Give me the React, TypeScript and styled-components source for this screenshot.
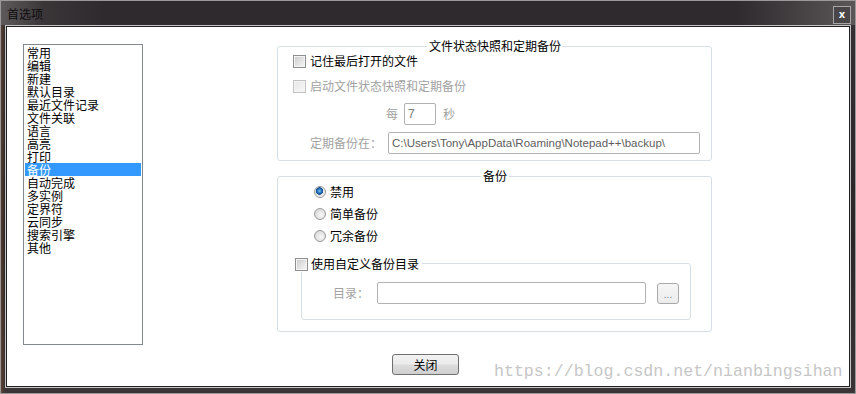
import styled, { createGlobalStyle } from "styled-components";

const NAV_ITEMS = [
  "常用",
  "编辑",
  "新建",
  "默认目录",
  "最近文件记录",
  "文件关联",
  "语言",
  "高亮",
  "打印",
  "备份",
  "自动完成",
  "多实例",
  "定界符",
  "云同步",
  "搜索引擎",
  "其他",
];

const SELECTED = "备份";

const BACKUP_MODES = ["禁用", "简单备份", "冗余备份"];

export default function App() {
  return (
    <>
      <GlobalStyle />
      <Window>
        <TitleBar>
          <TitleText>首选项</TitleText>
          <CloseButton>x</CloseButton>
        </TitleBar>
        <Client>
          <Body>
            <ListBox>
              {NAV_ITEMS.map((item) => (
                <ListItem key={item} $selected={item === SELECTED}>
                  {item}
                </ListItem>
              ))}
            </ListBox>
            <Panel>
              <Group>
                <GroupTitle $left={149}>文件状态快照和定期备份</GroupTitle>
                <GroupBody $padTop={6} $padBottom={6}>
                  <CheckRow>
                    <CheckBox />
                    <Label>记住最后打开的文件</Label>
                  </CheckRow>
                  <CheckRow $marginTop={9}>
                    <CheckBox $disabled />
                    <Label $disabled>启动文件状态快照和定期备份</Label>
                  </CheckRow>
                  <FieldRow $marginTop={9} $indent={93}>
                    <Label $disabled>每</Label>
                    <TextBox $width={32} $gapLeft={6}>
                      7
                    </TextBox>
                    <Label $disabled style={{ marginLeft: 7 }}>
                      秒
                    </Label>
                  </FieldRow>
                  <FieldRow $marginTop={7} $indent={17}>
                    <Label $disabled>定期备份在：</Label>
                    <TextBox $width={312} $gapLeft={6} $path>
                      C:\Users\Tony\AppData\Roaming\Notepad++\backup\
                    </TextBox>
                  </FieldRow>
                </GroupBody>
              </Group>

              <Group $marginTop={15}>
                <GroupTitle $left={203}>备份</GroupTitle>
                <GroupBody $padTop={7} $padBottom={11}>
                  <RadioList>
                    {BACKUP_MODES.map((mode, i) => (
                      <CheckRow key={mode}>
                        <Radio $checked={i === 0} />
                        <Label>{mode}</Label>
                      </CheckRow>
                    ))}
                  </RadioList>
                  <SubGroup>
                    <SubGroupTitle>
                      <CheckBox />
                      <Label>使用自定义备份目录</Label>
                    </SubGroupTitle>
                    <FieldRow $indent={31}>
                      <Label $disabled>目录：</Label>
                      <TextBox $width={269} $gapLeft={8} />
                      <BrowseButton>...</BrowseButton>
                    </FieldRow>
                  </SubGroup>
                </GroupBody>
              </Group>
            </Panel>
          </Body>
          <Footer>
            <PushButton>关闭</PushButton>
            <Watermark>https://blog.csdn.net/nianbingsihan</Watermark>
          </Footer>
        </Client>
      </Window>
    </>
  );
}

const GlobalStyle = createGlobalStyle`
  html, body {
    margin: 0;
    padding: 0;
    background: #ffffff;
  }
  body {
    font-family: "Noto Sans CJK SC", "Noto Sans", sans-serif;
    font-size: 12px;
    color: #000;
  }
`;

const Window = styled.div`
  width: 856px;
  height: 394px;
  box-sizing: border-box;
  display: flex;
  flex-direction: column;
  border: 1px solid #9a9899;
  background:
    linear-gradient(90deg, rgba(120, 78, 48, 0.55) 0, rgba(0, 0, 0, 0) 4px),
    linear-gradient(180deg, #343033 0%, #2a2628 60%, #3a3436 100%);
`;

const TitleBar = styled.div`
  height: 24px;
  flex: none;
  display: flex;
  align-items: center;
  justify-content: space-between;
  padding: 0 4px 0 6px;
  background: linear-gradient(
    90deg,
    #5e5a5c 0%,
    #3a3638 5%,
    #2e2a2d 12%,
    #2e2a2d 86%,
    #444042 93%,
    #5b5759 100%
  );
`;

const TitleText = styled.span`
  color: #0e0c0e;
  font-size: 12px;
  line-height: 14px;
  padding-top: 1px;
`;

const CloseButton = styled.span`
  width: 16px;
  height: 16px;
  margin-top: 4px;
  border: 1px solid #a8a4a6;
  background: #4a4548;
  color: #f4f4f4;
  font-family: "DejaVu Sans", sans-serif;
  font-size: 10px;
  font-weight: bold;
  line-height: 15px;
  text-align: center;
`;

const Client = styled.div`
  flex: 1;
  margin: 0 4px 5px 4px;
  border: 1px solid #c4c4c4;
  box-shadow: inset 0 0 0 1px #222022;
  background: #ffffff;
  display: flex;
  flex-direction: column;
  padding: 18px 0 0 17px;
`;

const Body = styled.div`
  display: flex;
  align-items: flex-start;
`;

const ListBox = styled.div`
  width: 120px;
  height: 301px;
  box-sizing: border-box;
  border: 1px solid #828790;
  padding: 1px 1px 0 1px;
  display: flex;
  flex-direction: column;
`;

const ListItem = styled.div<{ $selected?: boolean }>`
  height: 13px;
  line-height: 13px;
  padding-left: 2px;
  font-size: 12px;
  white-space: nowrap;
  color: ${(p) => (p.$selected ? "#ffffff" : "#000000")};
  background: ${(p) => (p.$selected ? "#3399ff" : "transparent")};
`;

const Panel = styled.div`
  width: 435px;
  margin: 2px 0 0 134px;
  display: flex;
  flex-direction: column;
`;

const Group = styled.div<{ $marginTop?: number }>`
  position: relative;
  border: 1px solid #d5dfe5;
  border-radius: 3px;
  margin-top: ${(p) => p.$marginTop ?? 0}px;
`;

const GroupTitle = styled.span<{ $left: number }>`
  position: absolute;
  top: -8px;
  left: ${(p) => p.$left}px;
  padding: 0 2px;
  background: #ffffff;
  line-height: 14px;
`;

const GroupBody = styled.div<{ $padTop: number; $padBottom: number }>`
  display: flex;
  flex-direction: column;
  padding: ${(p) => p.$padTop}px 0 ${(p) => p.$padBottom}px 15px;
`;

const CheckRow = styled.label<{ $marginTop?: number }>`
  display: flex;
  align-items: center;
  gap: 4px;
  height: 16px;
  margin-top: ${(p) => p.$marginTop ?? 0}px;
`;

const Label = styled.span<{ $disabled?: boolean }>`
  line-height: 16px;
  white-space: nowrap;
  color: ${(p) => (p.$disabled ? "#a2a2a2" : "#000000")};
`;

const CheckBox = styled.span<{ $disabled?: boolean }>`
  width: 13px;
  height: 13px;
  box-sizing: border-box;
  flex: none;
  border: 1px solid ${(p) => (p.$disabled ? "#c2c2c2" : "#8e8f8f")};
  box-shadow: inset 0 0 0 1px #f4f4f4;
  background: ${(p) =>
    p.$disabled
      ? "linear-gradient(135deg, #e6e6e6 0%, #f7f7f7 100%)"
      : "linear-gradient(135deg, #c9c9c9 0%, #e6e6e6 60%, #f6f6f6 100%)"};
`;

const RadioList = styled.div`
  display: flex;
  flex-direction: column;
  gap: 6px;
  margin-left: 21px;
`;

const Radio = styled.span<{ $checked?: boolean }>`
  width: 12px;
  height: 12px;
  box-sizing: border-box;
  flex: none;
  border-radius: 50%;
  border: 1px solid #9a9a9a;
  background: ${(p) =>
    p.$checked
      ? "radial-gradient(circle at 45% 40%, #7ec0f0 0, #2a79c0 2px, #0f4d8c 3.5px, #e8e8e8 4px, #f6f6f6 100%)"
      : "radial-gradient(circle at 60% 60%, #f7f7f7 0, #dcdcdc 70%, #cfcfcf 100%)"};
`;

const FieldRow = styled.div<{ $marginTop?: number; $indent: number }>`
  display: flex;
  align-items: center;
  height: 22px;
  margin-top: ${(p) => p.$marginTop ?? 0}px;
  padding-left: ${(p) => p.$indent}px;
`;

const TextBox = styled.span<{ $width: number; $gapLeft: number; $path?: boolean }>`
  width: ${(p) => p.$width}px;
  height: 22px;
  box-sizing: border-box;
  margin-left: ${(p) => p.$gapLeft}px;
  border: 1px solid #b2b2b2;
  border-radius: 2px;
  padding-left: 3px;
  font-family: "Liberation Sans", Arial, sans-serif;
  font-size: ${(p) => (p.$path ? "11.5px" : "12px")};
  line-height: 20px;
  color: ${(p) => (p.$path ? "#5e5e5e" : "#7a7a7a")};
  white-space: nowrap;
  overflow: hidden;
`;

const SubGroup = styled.div`
  position: relative;
  width: 390px;
  box-sizing: border-box;
  margin: 19px 0 0 8px;
  border: 1px solid #d5dfe5;
  border-radius: 3px;
  padding: 18px 0 15px 0;
`;

const SubGroupTitle = styled.label`
  position: absolute;
  top: -8px;
  left: -7px;
  display: flex;
  align-items: center;
  gap: 3px;
  padding-right: 3px;
  background: #ffffff;
`;

const BrowseButton = styled.span`
  width: 22px;
  height: 21px;
  box-sizing: border-box;
  margin-left: 11px;
  border: 1px solid #a8a8a8;
  border-radius: 3px;
  background: linear-gradient(#f6f6f6, #ececec);
  color: #6f84a8;
  font-family: "Liberation Sans", Arial, sans-serif;
  font-size: 10px;
  line-height: 21px;
  text-align: center;
`;

const Footer = styled.div`
  display: flex;
  align-items: flex-start;
  margin-top: 9px;
  padding-left: 369px;
`;

const PushButton = styled.span`
  width: 67px;
  height: 21px;
  box-sizing: border-box;
  border: 1px solid #707070;
  border-radius: 3px;
  background: linear-gradient(#f2f2f2 0%, #ebebeb 48%, #dddddd 52%, #cfcfcf 100%);
  text-align: center;
  line-height: 19px;
`;

const Watermark = styled.span`
  margin: 8px 0 0 35px;
  font-family: "Liberation Mono", "Courier New", monospace;
  font-size: 16.6px;
  line-height: 20px;
  color: #c6c6c6;
  white-space: nowrap;
`;
